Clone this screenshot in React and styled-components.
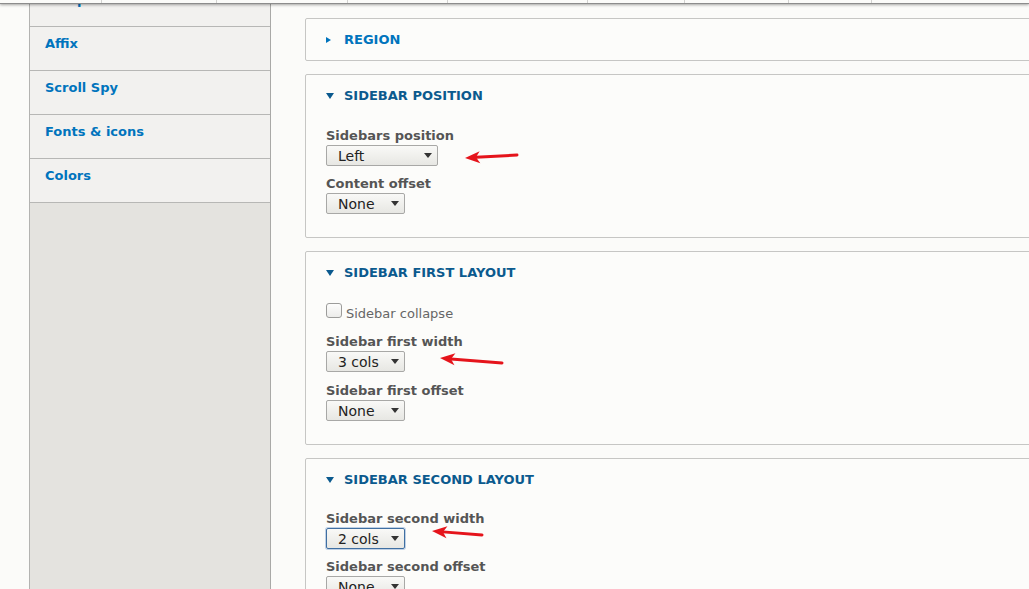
import React from 'react'
import styled, {createGlobalStyle, css} from 'styled-components'

const GlobalStyle = createGlobalStyle`
  html, body {
    margin: 0;
    padding: 0;
    overflow: hidden;
    background: #fbfbf9;
  }
  body {
    font-family: "DejaVu Sans", "Liberation Sans", sans-serif;
    font-size: 13px;
    line-height: 16px;
  }
`

const Toolbar = styled.div`
  position: fixed;
  top: 0;
  left: 0;
  right: 0;
  height: 3px;
  display: flex;
  background: #fbfbf9;
  border-bottom: 1px solid #8c8c8c;
  box-shadow: 0 1px 3px rgba(0, 0, 0, 0.35);
  z-index: 10;
`
const ToolbarTab = styled.div`
  width: ${p => p.$w}px;
  flex-shrink: 0;
  height: 100%;
  border-right: 1px solid #d2d2d0;
  box-sizing: border-box;
`

// page is scrolled down a little, the toolbar sits over it
const Page = styled.div`
  display: flex;
  margin-top: -17px;
  padding-left: 29px;
  min-height: 640px;
`
const Sidebar = styled.nav`
  width: 240px;
  flex-shrink: 0;
  background: #e4e3df;
  border-left: 1px solid #b3b3b1;
  border-right: 1px solid #a9a9a7;
`
const TabLink = styled.a`
  display: block;
  padding: 9px 15px 18px;
  background: #f2f1ef;
  border-bottom: 1px solid #b7b7b5;
  color: #0074bd;
  font-weight: bold;
  text-decoration: none;
`
const Main = styled.div`
  margin-left: 34px;
  padding-top: 35px;
  width: 800px;
  flex-shrink: 0;
`
const Fieldset = styled.section`
  background: #fcfcfa;
  border: 1px solid #c6c6c4;
  border-radius: 2px;
  margin-bottom: 13px;
`
const Legend = styled.div`
  display: flex;
  align-items: center;
  padding: 13px 20px 12px;
  font-weight: bold;
  text-transform: uppercase;
  color: ${p => (p.$open ? '#0b5a8e' : '#0074bd')};
`
const Caret = styled.span`
  width: 0;
  height: 0;
  margin-right: ${p => (p.$open ? 10 : 13)}px;
  ${p =>
    p.$open
      ? css`
          border-left: 4px solid transparent;
          border-right: 4px solid transparent;
          border-top: 6px solid currentColor;
        `
      : css`
          border-top: 3px solid transparent;
          border-bottom: 3px solid transparent;
          border-left: 5px solid currentColor;
        `}
`
const Body = styled.div`
  padding: ${p => p.$top}px 20px 23px;
`
const FormItem = styled.div`
  margin-top: ${p => p.$gap || 0}px;
`
const Label = styled.div`
  font-weight: bold;
  color: #555;
  margin-bottom: 1px;
`
const SelectRow = styled.div`
  position: relative;
  display: flex;
`
const Select = styled.div`
  box-sizing: border-box;
  width: ${p => p.$w}px;
  height: 21px;
  padding-left: 11px;
  display: flex;
  align-items: center;
  position: relative;
  font-size: 14px;
  color: #222;
  border: 1px solid ${p => (p.$focus ? '#3f6fa2' : '#a8a8a6')};
  box-shadow: ${p => (p.$focus ? '0 0 0 1px rgba(80,130,190,0.35)' : 'none')};
  border-radius: 2px;
  background: linear-gradient(#f9f9f7, #e7e7e3);
  &::after {
    content: '';
    position: absolute;
    right: 5px;
    top: 7px;
    border-left: 4px solid transparent;
    border-right: 4px solid transparent;
    border-top: 5px solid #333;
  }
`
const CheckRow = styled.label`
  display: flex;
  align-items: baseline;
  color: #666;
`
const Box = styled.span`
  box-sizing: border-box;
  width: 16px;
  height: 15px;
  margin-right: 4px;
  border: 1px solid #9c9c9a;
  border-radius: 3px;
  background: linear-gradient(#fdfdfc, #ececea);
`
const ArrowSvg = styled.svg`
  position: absolute;
  left: 0;
  top: 0;
  overflow: visible;
  pointer-events: none;
`

function RedArrow({tip, tail}) {
  const [tx, ty] = tip
  const [ex, ey] = tail
  const len = Math.hypot(ex - tx, ey - ty)
  const ux = (ex - tx) / len
  const uy = (ey - ty) / len
  const px = -uy
  const py = ux
  const hl = 15
  const hw = 6
  const b1 = [tx + ux * hl + px * hw, ty + uy * hl + py * hw]
  const b2 = [tx + ux * hl - px * hw, ty + uy * hl - py * hw]
  const n = [tx + ux * 11, ty + uy * 11]
  const pts = [tip, b1, n, b2].map(p => p.join(',')).join(' ')
  return (
    <ArrowSvg width="1" height="1">
      <line
        x1={n[0]}
        y1={n[1]}
        x2={ex}
        y2={ey}
        stroke="#e5141b"
        strokeWidth="3"
        strokeLinecap="round"
      />
      <polygon points={pts} fill="#e5141b" />
    </ArrowSvg>
  )
}

const tabs = [102, 115, 131, 100, 140, 97, 104, 83, 300]
const links = ['Components', 'Affix', 'Scroll Spy', 'Fonts & icons', 'Colors']

function Field({label, value, w, focus, arrow, gap}) {
  return (
    <FormItem $gap={gap}>
      <Label>{label}</Label>
      <SelectRow>
        <Select $w={w} $focus={focus}>{value}</Select>
        {arrow && <RedArrow tip={arrow[0]} tail={arrow[1]} />}
      </SelectRow>
    </FormItem>
  )
}

export default function App() {
  return (
    <>
      <GlobalStyle />
      <Toolbar>
        {tabs.map((w, i) => (
          <ToolbarTab key={i} $w={w} />
        ))}
      </Toolbar>
      <Page>
        <Sidebar>
          {links.map(l => (
            <TabLink key={l} href="#">
              {l}
            </TabLink>
          ))}
        </Sidebar>
        <Main>
          <Fieldset>
            <Legend>
              <Caret />
              Region
            </Legend>
          </Fieldset>

          <Fieldset>
            <Legend $open>
              <Caret $open />
              Sidebar position
            </Legend>
            <Body $top={12}>
              <Field
                label="Sidebars position"
                value="Left"
                w={112}
                arrow={[[139, 13], [191, 10]]}
              />
              <Field label="Content offset" value="None" w={79} gap={10} />
            </Body>
          </Fieldset>

          <Fieldset>
            <Legend $open>
              <Caret $open />
              Sidebar first layout
            </Legend>
            <Body $top={10}>
              <FormItem>
                <CheckRow>
                  <Box />
                  Sidebar collapse
                </CheckRow>
              </FormItem>
              <Field
                label="Sidebar first width"
                value="3 cols"
                w={79}
                gap={12}
                arrow={[[114, 7], [176, 12]]}
              />
              <Field label="Sidebar first offset" value="None" w={79} gap={11} />
            </Body>
          </Fieldset>

          <Fieldset>
            <Legend $open>
              <Caret $open />
              Sidebar second layout
            </Legend>
            <Body $top={11}>
              <Field
                label="Sidebar second width"
                value="2 cols"
                w={79}
                focus
                arrow={[[106, 3], [156, 7]]}
              />
              <Field label="Sidebar second offset" value="None" w={79} gap={10} />
            </Body>
          </Fieldset>
        </Main>
      </Page>
    </>
  )
}
